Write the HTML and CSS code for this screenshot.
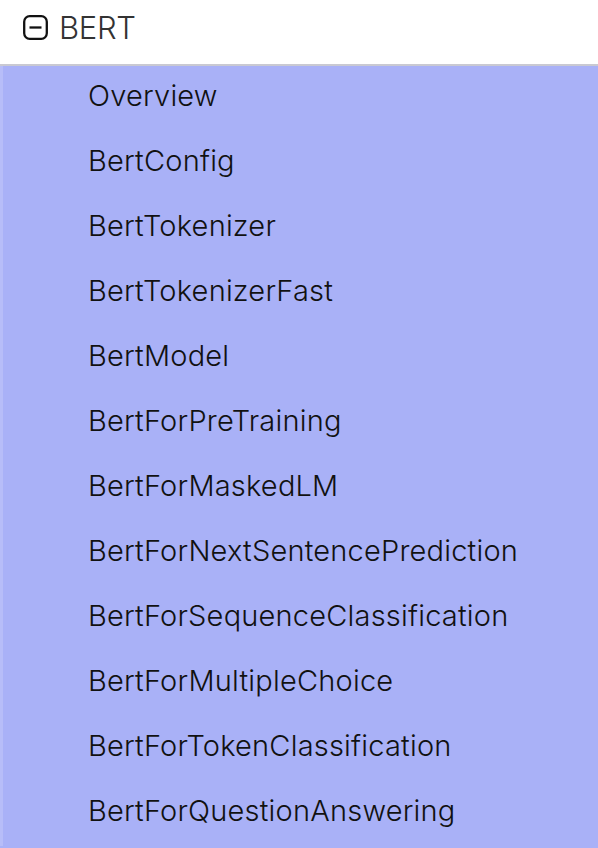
FILE: index.html
```html
<!DOCTYPE html>
<html lang="en">
<head>
    <meta charset="UTF-8">
    <meta name="viewport" content="width=device-width, initial-scale=1.0">
    <title>BERT</title>
    <link rel="stylesheet" href="styles.css">
</head>
<body>
    <div class="section">
        <div class="section-head">
            <svg class="toggle" width="25" height="25" viewBox="0 0 25 25" aria-hidden="true">
                <rect x="1.2" y="1.2" width="22.6" height="22.6" rx="5.5" fill="none" stroke="#111" stroke-width="2.3"/>
                <line x1="6.5" y1="12.5" x2="18.5" y2="12.5" stroke="#111" stroke-width="2.3"/>
            </svg>
            <span class="section-title">BERT</span>
        </div>
        <ul class="section-items">
            <li>Overview</li>
            <li>BertConfig</li>
            <li>BertTokenizer</li>
            <li>BertTokenizerFast</li>
            <li>BertModel</li>
            <li>BertForPreTraining</li>
            <li>BertForMaskedLM</li>
            <li>BertForNextSentencePrediction</li>
            <li>BertForSequenceClassification</li>
            <li>BertForMultipleChoice</li>
            <li>BertForTokenClassification</li>
            <li>BertForQuestionAnswering</li>
        </ul>
    </div>
</body>
</html>
```
FILE: styles.css
```css
body {
    margin: 0;
    padding: 0;
    font-family: Inter, "Noto Sans", sans-serif;
    background-color: #a9b1f7;
}
.section-head {
    display: flex;
    align-items: center;
    gap: 11px;
    height: 66px;
    padding: 0 0 10px 23px;
    background-color: #fff;
    border-bottom: 2px solid #c9c9d2;
    box-sizing: border-box;
}
.toggle {
    display: block;
}
.section-title {
    font-size: 31px;
    font-weight: 300;
    color: #333;
    letter-spacing: -0.3px;
}
.section-items {
    list-style: none;
    margin: 0;
    padding: 0 0 0 88px;
    border-left: 3px solid #b7bdf8;
}
.section-items li {
    height: 65px;
    line-height: 60px;
    font-size: 29px;
    font-weight: 300;
    color: #111;
    letter-spacing: 0.2px;
    margin-left: -3px;
}
```
